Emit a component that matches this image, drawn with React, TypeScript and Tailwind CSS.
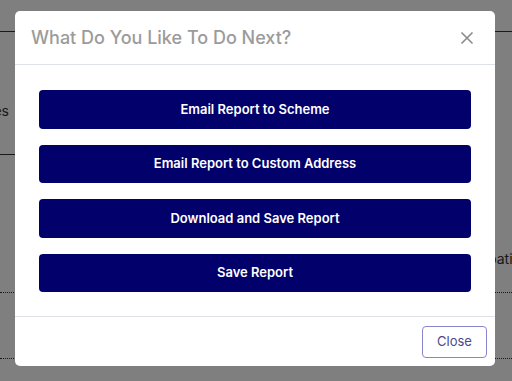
import React from "react";

export default function App() {
  const buttons = [
    "Email Report to Scheme",
    "Email Report to Custom Address",
    "Download and Save Report",
    "Save Report",
  ];
  return (
    <div
      className="relative w-[512px] h-[381px] overflow-hidden bg-white text-[#212529]"
      style={{ fontFamily: "Inter, 'Noto Sans', sans-serif" }}
    >
      {/* background page */}
      <div className="absolute inset-0">
        <div className="absolute left-0 right-0 top-[31px] border-t border-[#333]" />
        <div className="absolute right-[503px] top-[100px] text-[14px] text-[#333] whitespace-nowrap">Roles</div>
        <div className="absolute left-0 w-[40px] top-[154px] border-t border-[#333]" />
        <div className="absolute left-[453px] top-[248px] text-[14px] text-[#333] whitespace-nowrap">Occupation</div>
        <div className="absolute left-0 right-0 top-[292px] border-t border-dotted border-[#333]" />
        <div className="absolute left-0 right-0 top-[358px] border-t border-dotted border-[#333]" />
      </div>
      {/* overlay */}
      <div className="absolute inset-0 bg-black/50 flex justify-start items-start pt-[11px] pl-[15px]">
        {/* modal */}
        <div className="w-[480px] h-[355px] bg-white rounded-[5px] flex flex-col">
          <div className="flex items-center justify-between h-[54px] px-4 border-b border-[#dee2e6]">
            <h5 className="text-[18px] font-medium text-[#9b9b9b] leading-none">
              What Do You Like To Do Next?
            </h5>
            <svg width="14" height="14" viewBox="0 0 14 14" className="mr-[5px]">
              <path d="M1.5 1.5 L12.5 12.5 M12.5 1.5 L1.5 12.5" stroke="#8a8a8a" strokeWidth="1.6" />
            </svg>
          </div>
          <div className="flex flex-col gap-4 px-6 pt-[25px] pb-6">
            {buttons.map((b) => (
              <button
                key={b}
                className="h-[38.5px] w-full rounded-[4px] bg-[#02006b] text-white text-[13px] font-semibold"
              >
                {b}
              </button>
            ))}
          </div>
          <div className="mt-auto flex justify-end items-center h-[50px] border-t border-[#dee2e6] px-2">
            <button className="w-[65px] h-[32px] rounded-[4px] border border-[#8a84c8] text-[#4a4a8a] text-[13px]">
              Close
            </button>
          </div>
        </div>
      </div>
    </div>
  );
}
